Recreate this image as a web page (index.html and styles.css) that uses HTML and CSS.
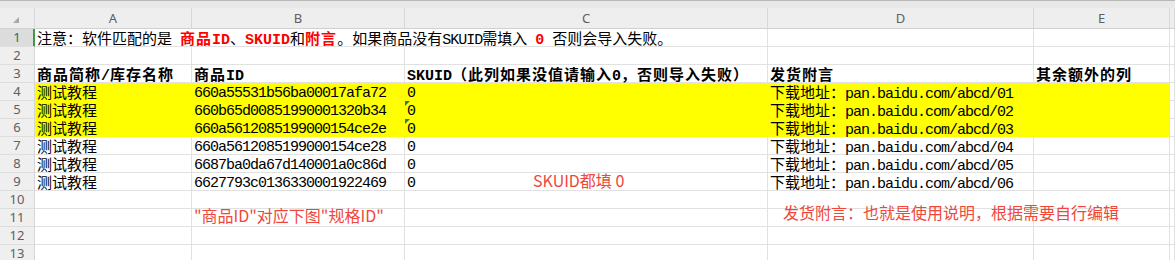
FILE: index.html
```html
<!DOCTYPE html>
<html>
<head>
    <meta charset="utf-8">
    <title>商品导入模板</title>
    <link rel="stylesheet" href="styles.css">
</head>
<body>
    <div class="topbar"></div>
    <div class="sheet-wrap">
        <table class="sheet">
            <thead>
                <tr>
                    <th class="corner w-rh"><span class="corner-mark"></span></th>
                    <th class="w-a">A</th>
                    <th class="w-b">B</th>
                    <th class="w-c">C</th>
                    <th class="w-d">D</th>
                    <th class="w-e">E</th>
                    <th class="w-f"></th>
                </tr>
            </thead>
            <tbody>
                <tr>
                    <th class="rh sel">1</th>
                    <td colspan="3">注意：软件匹配的是<span class="en"> </span><b class="red">商品<span class="en">ID</span></b>、<b class="red en">SKUID</b>和<b class="red">附言</b>。如果商品没有<span class="en">SKUID</span>需填入<span class="en"> </span><b class="red en">0</b><span class="en"> </span>否则会导入失败。</td>
                    <td></td><td></td><td></td>
                </tr>
                <tr>
                    <th class="rh">2</th>
                    <td></td><td></td><td></td><td></td><td></td><td></td>
                </tr>
                <tr class="head">
                    <th class="rh">3</th>
                    <td>商品简称<span class="en">/</span>库存名称</td>
                    <td>商品<span class="en">ID</span></td>
                    <td><span class="en">SKUID</span>（此列如果没值请输入<span class="en">0</span>，否则导入失败）</td>
                    <td>发货附言</td>
                    <td>其余额外的列</td>
                    <td></td>
                </tr>
                <tr class="hl">
                    <th class="rh">4</th>
                    <td>测试教程</td>
                    <td class="en">660a55531b56ba00017afa72</td>
                    <td class="en">0</td>
                    <td>下载地址：<span class="en">pan.baidu.com/abcd/01</span></td>
                    <td></td><td></td>
                </tr>
                <tr class="hl">
                    <th class="rh">5</th>
                    <td>测试教程</td>
                    <td class="en">660b65d00851990001320b34</td>
                    <td class="en warn">0</td>
                    <td>下载地址：<span class="en">pan.baidu.com/abcd/02</span></td>
                    <td></td><td></td>
                </tr>
                <tr class="hl">
                    <th class="rh">6</th>
                    <td>测试教程</td>
                    <td class="en">660a5612085199000154ce2e</td>
                    <td class="en warn">0</td>
                    <td>下载地址：<span class="en">pan.baidu.com/abcd/03</span></td>
                    <td></td><td></td>
                </tr>
                <tr>
                    <th class="rh">7</th>
                    <td>测试教程</td>
                    <td class="en">660a5612085199000154ce28</td>
                    <td class="en">0</td>
                    <td>下载地址：<span class="en">pan.baidu.com/abcd/04</span></td>
                    <td></td><td></td>
                </tr>
                <tr>
                    <th class="rh">8</th>
                    <td>测试教程</td>
                    <td class="en">6687ba0da67d140001a0c86d</td>
                    <td class="en">0</td>
                    <td>下载地址：<span class="en">pan.baidu.com/abcd/05</span></td>
                    <td></td><td></td>
                </tr>
                <tr>
                    <th class="rh">9</th>
                    <td>测试教程</td>
                    <td class="en">6627793c0136330001922469</td>
                    <td class="en">0</td>
                    <td>下载地址：<span class="en">pan.baidu.com/abcd/06</span></td>
                    <td></td><td></td>
                </tr>
                <tr>
                    <th class="rh">10</th>
                    <td></td><td></td><td></td><td></td><td></td><td></td>
                </tr>
                <tr>
                    <th class="rh">11</th>
                    <td></td><td></td><td></td><td></td><td></td><td></td>
                </tr>
                <tr>
                    <th class="rh">12</th>
                    <td></td><td></td><td></td><td></td><td></td><td></td>
                </tr>
                <tr>
                    <th class="rh">13</th>
                    <td></td><td></td><td></td><td></td><td></td><td></td>
                </tr>
            </tbody>
        </table>

        <!-- text boxes floating over the grid -->
        <div class="note note-skuid">SKUID都填 0</div>
        <div class="note note-id">"商品ID"对应下图"规格ID"</div>
        <div class="note note-msg">发货附言：也就是使用说明，根据需要自行编辑</div>
    </div>
</body>
</html>
```

FILE: styles.css
```css
body {
    margin: 0;
    background-color: #fff;
    font-family: "Noto Sans CJK SC", sans-serif;
    overflow: hidden;
}

.topbar {
    height: 7px;
    background-color: #e8e8e8;
    border-top: 1px solid #b8b8b8;
}

.sheet-wrap {
    position: relative;
}

.sheet {
    border-collapse: separate;
    border-spacing: 0;
    table-layout: fixed;
    width: 1175px;
}

.sheet th,
.sheet td {
    box-sizing: border-box;
    height: 18px;
    padding: 0 2px;
    line-height: 17px;
    font-size: 15px;
    font-weight: normal;
    color: #000;
    text-align: left;
    vertical-align: bottom;
    white-space: nowrap;
    border-right: 1px solid #e1e1e1;
    border-bottom: 1px solid #e1e1e1;
}

/* column letters */
.sheet thead th {
    height: 21px;
    padding: 0;
    line-height: 20px;
    font-family: "Noto Sans", sans-serif;
    font-size: 13px;
    color: #606060;
    text-align: center;
    vertical-align: middle;
    background-color: #eeeeee;
    border-right-color: #d8d8d8;
    border-bottom-color: #d0d0d0;
}

.w-rh { width: 35px; }
.w-a { width: 157px; }
.w-b { width: 213px; }
.w-c { width: 363px; }
.w-d { width: 266px; }
.w-e { width: 136px; }

.corner-mark {
    display: inline-block;
    width: 0;
    height: 0;
    margin: 5px 0 0 -2px;
    border-left: 6px solid transparent;
    border-bottom: 6px solid #a9a9a9;
}

/* row numbers */
.sheet .rh {
    padding: 0;
    font-family: "Noto Sans", sans-serif;
    font-size: 13px;
    color: #606060;
    text-align: center;
    vertical-align: middle;
    background-color: #efefef;
    border-right-color: #d6d6d6;
    border-bottom-color: #dddddd;
}

.sheet .rh.sel {
    background-color: #dcdcdc;
    color: #2d6e50;
    border-right-color: #3f9a48;
    box-shadow: inset -1px 0 #3f9a48;
}

/* latin runs: narrow mono, 8px per char */
.en {
    font-family: "Liberation Mono", monospace;
    letter-spacing: -1px;
}

/* keep mixed runs from stretching the row */
.sheet .en {
    line-height: 0;
}

.sheet td.en {
    line-height: 13px;
}

.red {
    color: #ff0000;
    font-weight: bold;
}

/* bold text runs a pixel wider per glyph */
.sheet .head td,
.red {
    letter-spacing: 1px;
}

.head .en,
.red .en,
.red.en {
    letter-spacing: 0;
}

.head td {
    font-weight: bold;
}

.hl td {
    background-color: #ffff00;
    border-right-color: #ffff00;
    border-bottom-color: #ffff00;
}

.hl td:nth-last-child(2) {
    border-right-color: #e1e1e1;
}

.hl td:last-child {
    background-color: #fff;
    border-right-color: #e1e1e1;
    border-bottom-color: #e1e1e1;
}

/* number stored as text marker */
.warn {
    position: relative;
}

.warn::before {
    content: "";
    position: absolute;
    left: 0;
    top: 0;
    border-top: 5px solid #1e8a3a;
    border-right: 5px solid transparent;
}

.note {
    position: absolute;
    font-family: "Noto Sans CJK SC", sans-serif;
    font-size: 16px;
    line-height: 20px;
    color: #f0473b;
    white-space: nowrap;
}

.note-skuid {
    left: 533px;
    top: 162px;
}

.note-id {
    left: 194px;
    top: 197px;
}

.note-msg {
    left: 783px;
    top: 194px;
}
```
